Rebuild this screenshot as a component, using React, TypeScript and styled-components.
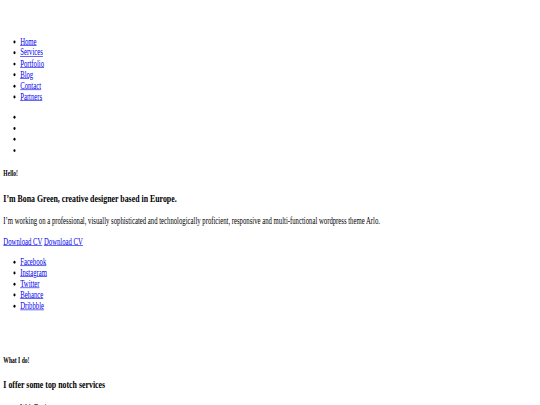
import React from 'react'
import styled, { createGlobalStyle } from 'styled-components'

// Sayfa geniş bir pencerede çizilip 540x405 kareye sıkıştırılmış gibi görünüyor
const GlobalStyle = createGlobalStyle`
  html, body {
    margin: 0;
    padding: 0;
    background: #fff;
    overflow: hidden;
  }
`

const Viewport = styled.div`
  width: 1286px;
  height: 680px;
  transform: scale(0.42, 0.5965);
  transform-origin: 0 0;
  overflow: hidden;
`

const Page = styled.div`
  padding: 0 8px;
  font-family: 'Liberation Serif', 'Times New Roman', serif;
  font-size: 16px;
  color: #000;
`

const Header = styled.header`
  padding-top: 45px;
`

const List = styled.ul`
  margin: 16px 0;
  padding-left: 40px;
  list-style: disc;
`

const Item = styled.li`
  min-height: 1.15em;
`

const Link = styled.a`
  color: #0000ee;
  text-decoration: underline;
`

const Section = styled.section<{ $top?: number }>`
  padding-top: ${(p) => p.$top ?? 0}px;
`

const Kicker = styled.h5`
  margin: 1.67em 0;
  font-size: 0.83em;
  font-weight: bold;
`

const Title = styled.h3`
  margin: 1em 0;
  font-size: 1.17em;
  font-weight: bold;
`

const Text = styled.p`
  margin: 1em 0;
`

const navLinks = ['Home', 'Services', 'Portfolio', 'Blog', 'Contact', 'Partners']
const socialLinks = ['Facebook', 'Instagram', 'Twitter', 'Behance', 'Dribbble']
const services = ['Web Design', 'Branding', 'Photography']

const App: React.FC = () => (
  <>
    <GlobalStyle />
    <Viewport>
      <Page>
        {/* Menü */}
        <Header>
          <List>
            {navLinks.map((label) => (
              <Item key={label}>
                <Link href="#">{label}</Link>
              </Item>
            ))}
          </List>
          {/* İkon linkleri (metinsiz) */}
          <List>
            {[0, 1, 2, 3].map((i) => (
              <Item key={i} />
            ))}
          </List>
        </Header>

        {/* Giriş */}
        <Section>
          <Kicker>Hello!</Kicker>
          <Title>I’m Bona Green, creative designer based in Europe.</Title>
          <Text>
            I’m working on a professional, visually sophisticated and technologically
            proficient, responsive and multi-functional wordpress theme Arlo.
          </Text>
          <Text>
            <Link href="#">Download CV</Link> <Link href="#">Download CV</Link>
          </Text>
          <List>
            {socialLinks.map((label) => (
              <Item key={label}>
                <Link href="#">{label}</Link>
              </Item>
            ))}
          </List>
        </Section>

        {/* Hizmetler */}
        <Section $top={36}>
          <Kicker>What I do!</Kicker>
          <Title>I offer some top notch services</Title>
          <List>
            {services.map((label) => (
              <Item key={label}>{label}</Item>
            ))}
          </List>
        </Section>
      </Page>
    </Viewport>
  </>
)

export default App
